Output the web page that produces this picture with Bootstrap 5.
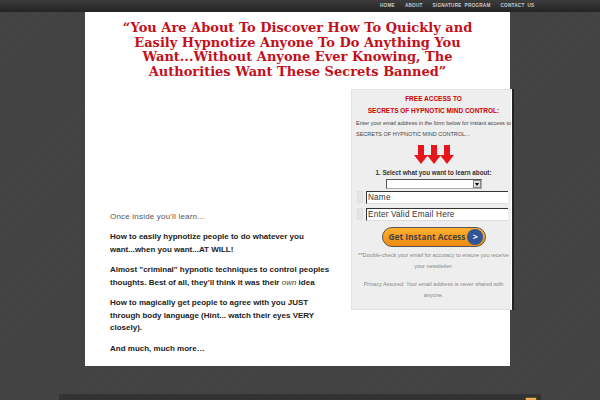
<!DOCTYPE html>
<html lang="en"><head><meta charset="utf-8"><title>Hypnotic Mind Control</title>
<link href="https://cdn.jsdelivr.net/npm/bootstrap@5.3.0/dist/css/bootstrap.min.css" rel="stylesheet">
<style>
html,body{height:400px;overflow:hidden}
body{background:#444 repeating-linear-gradient(135deg,#454545 0 1px,#424242 1px 3px);font-family:"Liberation Sans",Arial,sans-serif;color:#333}
.topbar{height:12px;background:linear-gradient(#3c3c3c,#242424);padding-left:380px;gap:10px;font-size:4.700px;font-weight:700;letter-spacing:.2px;color:#ccc;line-height:11px;word-spacing:1.500px}
.sheet{width:425px;height:354px;margin-left:85px;background:#fff;position:relative}
.headline{font-family:"DejaVu Serif",serif;font-weight:700;font-size:13px;line-height:14.500px;color:#c4101a;text-align:center;margin:0;padding:9px 0 0}
.bodycol{width:241px;flex:none;margin-left:25px;padding-top:132px;font-size:8px;line-height:12.700px;color:#333}
.bodycol p{margin:0 0 7.500px}
.bodycol .lead-in{font-weight:400;color:#555;letter-spacing:.2px}
.bodycol b{font-weight:700;color:#222}
.bodycol em{font-weight:400;color:#444}
.optin{width:161px;height:221px;margin-top:10px;background:#eee;border:1px solid #e2e2e2;border-right-color:#fff;box-shadow:2px 0 0 #222;flex:none;text-align:center;padding:3px 0 0 4px;font-size:5.500px;line-height:11px;color:#888}
.optin h6{margin:0;font-size:6.500px;line-height:12px;font-weight:700;color:#c00}
.optin .intro{text-align:left;color:#444;line-height:10.500px;margin:1px 0 0;white-space:nowrap}
.arrows{margin-top:6px;height:19px;line-height:0}
.pick{font-weight:700;font-size:6.300px;color:#333;line-height:9px;margin-top:3.500px}
.fake-select{width:96px;height:10px;margin:2.500px auto 0;background:#fff;border:1px solid #555;border-right-color:#aaa;border-bottom-color:#aaa;position:relative}
.fake-select span{position:absolute;right:0;top:0;width:8px;height:8px;background:#ddd;border:1px solid #888}
.fake-select span::after{content:"";position:absolute;left:1px;top:2px;border:2px solid transparent;border-top:3px solid #000}
.fieldrow{gap:3px;margin-top:4px;padding-left:1px;height:13px}
.fake-select+.fieldrow{margin-top:2px}
.tick{width:6px;height:12px;background:#e6e6e6;border:1px solid #ddd;border-radius:1px}
.entry{width:142px;height:13px;background:#fff;border-top:1px solid #333;border-left:1px solid #333;border-bottom:1px solid #ddd;font-size:8.200px;line-height:12px;color:#333;text-align:left;padding-left:1px;letter-spacing:.2px}
.getbtn{width:104px;height:20px;margin:6px auto 0;border-radius:10px;background:linear-gradient(#ffb030,#f08a10);border:1px solid #555;font-size:8.400px;font-weight:700;color:#444;font-family:"Open Sans","Liberation Sans",sans-serif;line-height:18px;padding-left:6px;gap:2px;white-space:nowrap}
.go{width:16px;height:16px;border-radius:50%;background:#2f5597;color:#fff;font-size:9px;line-height:16px;text-align:center;flex:none}
.small-note{margin:3px 0 0}
.small-note+.small-note{margin-top:6.500px;padding:0 6px}
.footbar{width:482px;height:12px;margin:28px 0 0 59px;background:#333;border-radius:3px 3px 0 0;position:relative}
.rss{position:absolute;right:4px;top:3px;width:12px;height:10px;background:linear-gradient(#ffb060,#e07020);border:1px solid #552;border-radius:1px}
</style></head>
<body>
<div class="topbar d-flex"><span>HOME</span><span>ABOUT</span><span>SIGNATURE PROGRAM</span><span>CONTACT US</span></div>
<div class="sheet">
<h1 class="headline">“You Are About To Discover How To Quickly and<br>Easily Hypnotize Anyone To Do Anything You<br>Want...Without Anyone Ever Knowing, The<br>Authorities Want These Secrets Banned”</h1>
<div class="d-flex">
<div class="bodycol">
<p class="lead-in">Once inside you'll learn...</p>
<p><b>How to easily hypnotize people to do whatever you<br>want...when you want...AT WILL!</b></p>
<p><b>Almost "criminal" hypnotic techniques to control peoples<br>thoughts. Best of all, they'll think it was their <em>own</em> idea</b></p>
<p><b>How to magically get people to agree with you JUST<br>through body language (Hint... watch their eyes VERY<br>closely).</b></p>
<p><b>And much, much more…</b></p>
</div>
<div class="optin">
<h6>FREE ACCESS TO<br>SECRETS OF HYPNOTIC MIND CONTROL:</h6>
<div class="intro">Enter your email address in the form below for instant access to<br>SECRETS OF HYPNOTIC MIND CONTROL...</div>
<div class="arrows"><svg width="40" height="19" viewBox="0 0 40 19"><g fill="#e8141c"><path d="M4 0h6v10h4l-7 9-7-9h4z"/><path d="M17 0h6v10h4l-7 9-7-9h4z"/><path d="M30 0h6v10h4l-7 9-7-9h4z"/></g></svg></div>
<div class="pick">1. Select what you want to learn about:</div>
<div class="fake-select"><span></span></div>
<div class="fieldrow d-flex"><span class="tick"></span><div class="entry">Name</div></div>
<div class="fieldrow d-flex"><span class="tick"></span><div class="entry">Enter Valid Email Here</div></div>
<div class="getbtn d-flex align-items-center"><span>Get Instant Access</span><span class="go">&gt;</span></div>
<p class="small-note">**Double-check your email for accuracy to ensure you receive your newsletter.</p>
<p class="small-note">Privacy Assured: Your email address is never shared with anyone.</p>
</div>
</div>
</div>
<div class="footbar"><span class="rss"></span></div>
</body></html>
